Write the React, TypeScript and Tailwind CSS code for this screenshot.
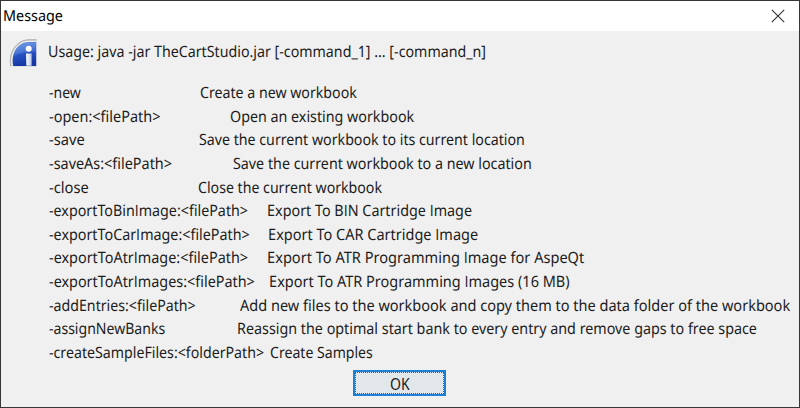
import { useLayoutEffect, useRef, useState } from "react";

type FitProps = { text: string; width: number; className?: string };

/* Condenses the text so that its visible ink starts at the left edge and spans `width`. */
function Fit({ text, width, className = "" }: FitProps) {
  const ref = useRef<HTMLSpanElement>(null);
  const [fit, setFit] = useState({ scale: 1, shift: 0 });
  useLayoutEffect(() => {
    const ctx = document.createElement("canvas").getContext("2d");
    if (!ref.current || !ctx) return;
    const style = getComputedStyle(ref.current);
    ctx.font = `${style.fontSize} ${style.fontFamily}`;
    const before = -ctx.measureText(text[0]).actualBoundingBoxLeft;
    const last = ctx.measureText(text[text.length - 1]);
    const after = last.width - last.actualBoundingBoxRight;
    const advance = parseFloat(style.width);
    const scale = width / (advance - before - after);
    setFit({ scale, shift: -before * scale });
  }, [text, width]);
  return (
    <span className={`block shrink-0 ${className}`} style={{ width }}>
      <span
        ref={ref}
        className="inline-block origin-left whitespace-pre"
        style={{ transform: `translateX(${fit.shift}px) scaleX(${fit.scale})` }}
      >
        {text.split(/(I)/).map((part, i) =>
          part === "I" ? (
            <span key={i} className="font-['Open_Sans',sans-serif]">
              I
            </span>
          ) : (
            part
          ),
        )}
      </span>
    </span>
  );
}

const LEFT = 49.5;

/* option, right edge of option, left edge of description, right edge of description, description */
const rows: [string, number, number, number, string][] = [
  ["-new", 82, 200.6, 358, "Create a new workbook"],
  ["-open:<filePath>", 161, 230.2, 415, "Open an existing workbook"],
  ["-save", 84.5, 199, 524.3, "Save the current workbook to its current location"],
  ["-saveAs:<filePath>", 172.6, 233.6, 531.8, "Save the current workbook to a new location"],
  ["-close", 88.6, 198.8, 383.4, "Close the current workbook"],
  ["-exportToBinImage:<filePath>", 248.6, 268, 471.3, "Export To BIN Cartridge Image"],
  ["-exportToCarImage:<filePath>", 250.3, 269.6, 478, "Export To CAR Cartridge Image"],
  ["-exportToAtrImage:<filePath>", 248.6, 268, 584.6, "Export To ATR Programming Image for AspeQt"],
  ["-exportToAtrImages:<filePath>", 255.4, 270.8, 570.7, "Export To ATR Programming Images (16 MB)"],
  ["-addEntries:<filePath>", 196.3, 240.2, 791, "Add new files to the workbook and copy them to the data folder of the workbook"],
  ["-assignNewBanks", 165.2, 238.6, 756.8, "Reassign the optimal start bank to every entry and remove gaps to free space"],
  ["-createSampleFiles:<folderPath>", 264.6, 270.6, 373, "Create Samples"],
];

function InfoIcon() {
  return (
    <svg className="block h-7 w-7" viewBox="0 0 28 28">
      <defs>
        <linearGradient id="blue" x1="0" y1="0" x2="0.25" y2="1">
          <stop offset="0" stopColor="#6f9be8" />
          <stop offset="0.35" stopColor="#4a78d6" />
          <stop offset="0.6" stopColor="#2450c2" />
          <stop offset="1" stopColor="#1638a2" />
        </linearGradient>
        <linearGradient id="stem" x1="0" y1="0" x2="1" y2="0">
          <stop offset="0" stopColor="#ffffff" />
          <stop offset="1" stopColor="#b9c8e8" />
        </linearGradient>
      </defs>
      <path d="M2.2 27.5C-1 14 7 .8 20 .8H27.5V27.5Z" fill="#d0d1d1" />
      <path d="M1.7 27C-.8 13 8 .8 20 .8H27.5" fill="none" stroke="#a3a5a7" strokeWidth="0.9" />
      <path d="M3.4 27.2C.5 14 9 2.3 20 2.3H27" fill="none" stroke="#f8f8f8" strokeWidth="0.9" />
      <path d="M4.2 27C1.6 14 9.2 3.1 20 3.1H27.2V27Z" fill="url(#blue)" />
      <path d="M5 17C6 9 12 4 20 4H26.8V13C18 12 10 14 5 17Z" fill="#90b1ee" opacity="0.2" />
      <circle cx="19.7" cy="9.8" r="3" fill="#fff" />
      <path d="M17 14.6H22.6V26.8H17.4Z" fill="url(#stem)" />
    </svg>
  );
}

export default function App() {
  return (
    <div className="flex h-[408px] w-[800px] flex-col overflow-hidden border border-[#373537] bg-[#f0f0f0] font-['Noto_Sans','Open_Sans',sans-serif] text-[15.6px] text-[#1c1c1c] [text-rendering:geometricPrecision]">
      <header className="flex h-[30px] shrink-0 items-center justify-between bg-white pr-[14px] pl-[3.3px] text-[15px] text-black">
        <Fit text="Message" width={58.5} className="pt-px" />
        <svg className="mb-px h-[14px] w-[14px]" viewBox="0 0 14 14">
          <path d="M.8.8 13.2 13.2M13.2.8.8 13.2" fill="none" stroke="#333" strokeWidth="1.15" />
        </svg>
      </header>
      <main className="flex flex-1 flex-col">
        <div className="flex">
          <div className="w-[48px] shrink-0 pt-[8px] pl-[8px]">
            <InfoIcon />
          </div>
          <div className="pt-[9px]">
            <div className="h-[41px] leading-[23.6px]">
              <Fit text="Usage: java -jar TheCartStudio.jar [-command_1] ... [-command_n]" width={436} />
            </div>
            {rows.map(([option, optionEnd, start, end, description]) => (
              <div key={option} className="flex h-[23.64px] leading-[23.64px]">
                <div className="shrink-0" style={{ width: start - LEFT }}>
                  <Fit text={option} width={optionEnd - LEFT} />
                </div>
                <Fit text={description} width={end - start} />
              </div>
            ))}
          </div>
        </div>
        <div className="flex pt-[5.3px] pl-[352px]">
          <button className="flex h-[26px] w-[93px] items-center justify-center border-2 border-[#1b80d6] bg-[#e2e7eb] p-0">
            <span className="flex h-full w-full items-center justify-center border border-dotted border-[#555] pt-[3px]">
              <Fit text="OK" width={20} className="text-left" />
            </span>
          </button>
        </div>
      </main>
    </div>
  );
}
